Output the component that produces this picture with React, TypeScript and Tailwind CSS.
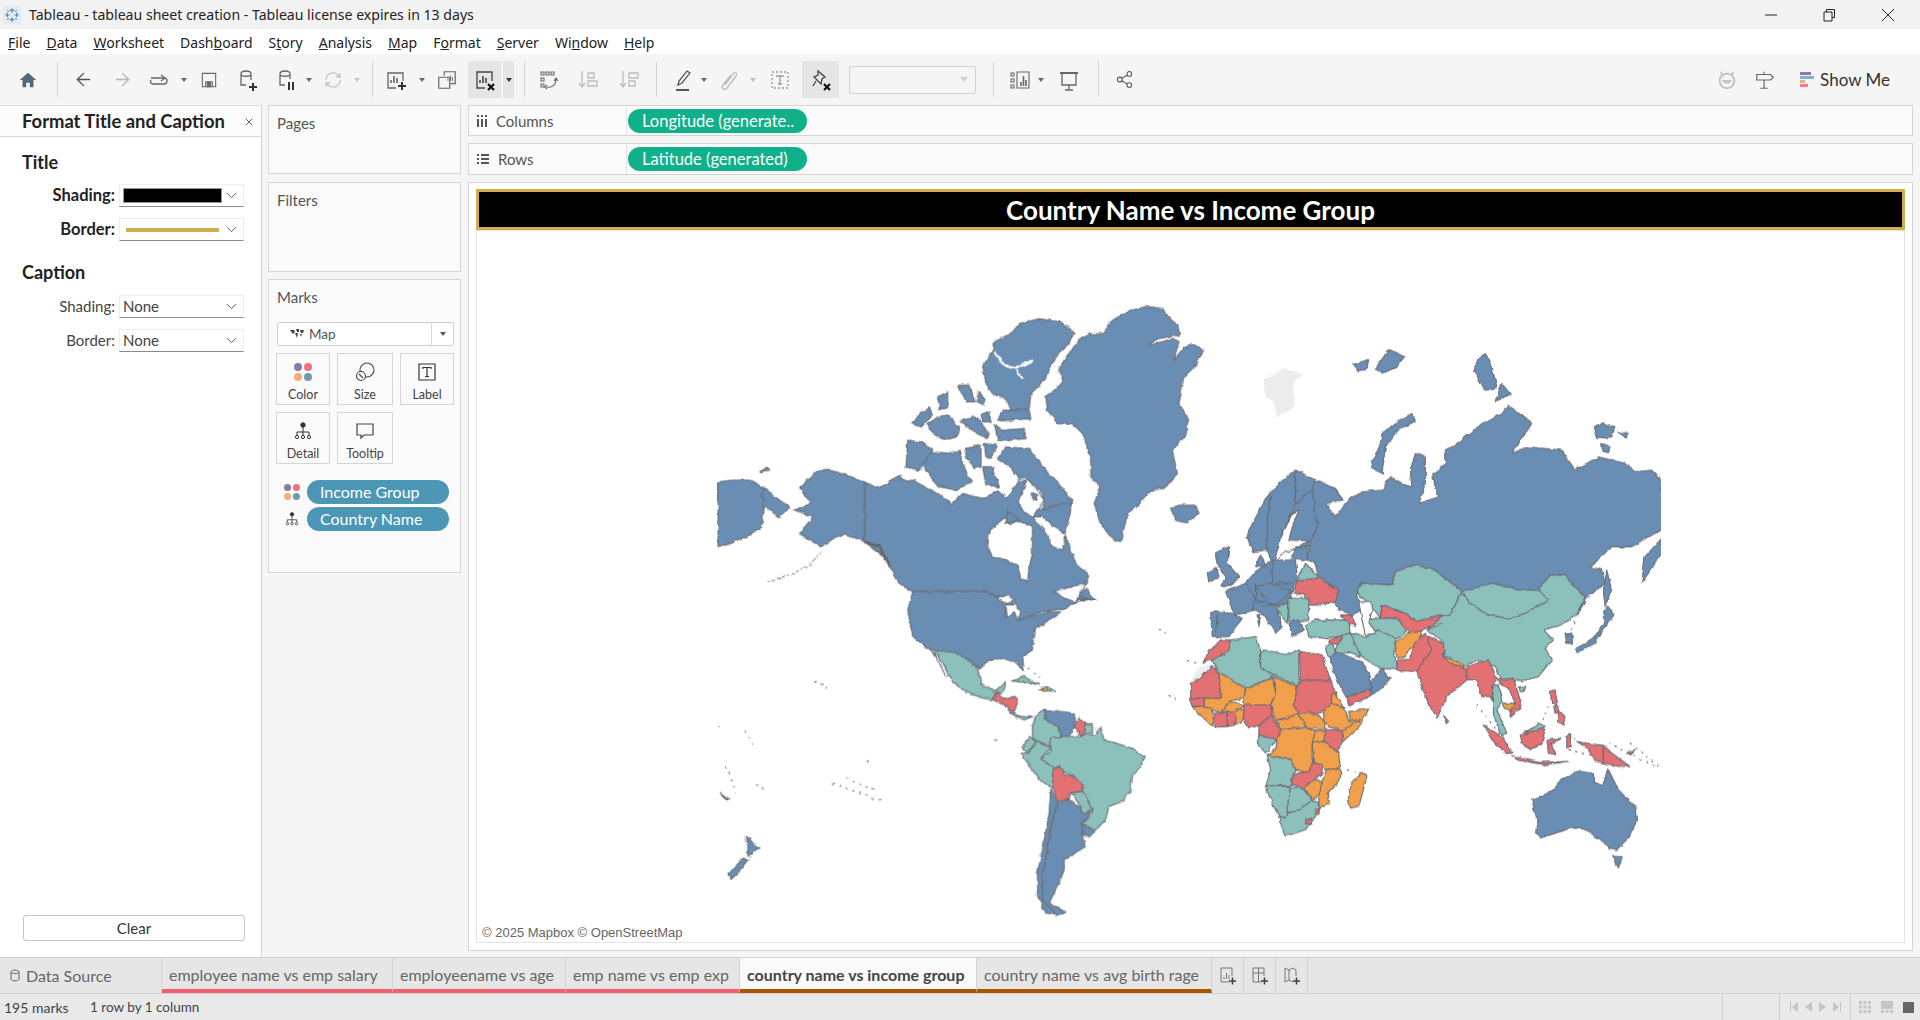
import React from 'react';
import { ArrowLeft, ArrowRight, ChevronDown, Share2, X } from 'lucide-react';

const FILL: Record<string, string> = {
  b: '#6b8db3',
  t: '#8cc0bb',
  r: '#e36f72',
  o: '#f29f4b',
  g: '#ececec',
  w: '#ffffff',
};

// map shapes, coordinates read off 3x crops of the picture: [fill, points]
type Shape = [string, string];

const northAmerica: Shape[] = [
  ['b', '1040,320 1085,285 1090,255 1075,240 1105,195 1125,165 1170,130 1210,130 1240,90 1290,60 1345,48 1395,55 1410,85 1440,110 1440,135 1375,145 1350,165 1420,145 1440,150 1425,210 1455,170 1480,160 1515,180 1490,225 1455,260 1440,340 1465,380 1465,430 1420,480 1435,550 1400,590 1350,605 1310,650 1285,670 1265,755 1235,745 1200,690 1185,640 1205,590 1175,560 1175,500 1150,430 1120,400 1075,400 1045,360'],
  ['b', '850,225 885,175 885,155 940,125 960,100 1020,85 1085,95 1125,125 1110,160 1070,195 1050,240 1020,285 995,310 990,355 935,360 925,330 880,310 860,280'],
  ['b', '895,505 920,470 990,475 1040,540 1080,580 1120,635 1110,670 1090,660 1100,710 1060,685 1015,675 1035,640 1030,610 985,565 960,565 930,530'],
  ['b', '670,510 700,485 760,490 780,480 790,520 815,575 770,600 720,590 680,545'],
  ['b', '625,450 665,455 700,480 660,540 620,530'],
  ['b', '640,400 665,365 695,352 695,380 665,410'],
  ['b', '685,400 710,385 745,375 780,410 778,435 730,450 695,425'],
  ['b', '775,285 810,285 830,335 800,335'],
  ['b', '835,305 860,330 855,345 835,335'],
  ['b', '785,390 830,380 870,430 860,445 825,425'],
  ['b', '845,370 870,368 875,395 850,395'],
  ['b', '885,400 910,420 975,415 980,445 935,450 895,450'],
  ['b', '895,390 910,360 990,360 995,385 905,392'],
  ['b', '715,320 745,305 745,350 720,355'],
  ['b', '800,475 845,465 845,530 825,535 800,500'],
  ['b', '855,460 895,465 875,505 860,500'],
  ['b', '850,530 880,530 900,590 860,585'],
  ['b', '180,545 205,530 210,540'],
  ['b', '495,575 540,595 600,555 620,575 640,570 705,605 760,640 790,610 850,625 900,600 925,625 960,570 985,575 1020,660 1090,640 1120,640 1105,700 1095,725 1130,820 1165,850 1165,880 1140,900 1190,930 1140,930 1100,955 1030,965 960,990 945,960 915,985 925,930 860,905 640,905 600,880 555,800 495,755'],
  ['b', '640,905 860,905 915,930 920,985 945,960 960,990 1050,965 1085,965 1050,990 1005,1020 1000,1080 970,1100 975,1145 955,1120 920,1105 870,1110 840,1135 800,1105 750,1090 690,1080 640,1040 625,960'],
  ['b', '495,575 440,555 375,535 345,550 300,595 335,640 285,660 340,680 300,730 365,770 410,740 440,735 495,755'],
  ['b', '55,575 100,570 150,570 190,590 240,630 270,650 240,680 195,650 185,715 130,745 55,770'],
  ['b', '1415,655 1440,645 1490,645 1500,670 1460,698 1430,690'],
  ['w', '865,770 870,720 920,680 930,700 970,695 1000,710 1000,790 990,830 985,875 965,870 955,825 880,800'],
  ['w', '960,625 985,565 1035,630 1000,680 965,660'],
  ['w', '1000,680 1030,680 1100,735 1090,780 1060,770 1040,730'],
  ['b', '925,660 960,690 920,700'],
  ['b', '1000,610 1015,615 1010,630 1000,625'],
  ['w', '890,925 930,915 945,930 920,940'],
  ['w', '920,945 950,945 965,965 955,990 945,965 925,985'],
  ['w', '1060,905 1160,880 1130,935 1095,925 1080,910'],
  ['b', '1140,915 1160,895 1190,930 1150,925'],
];

const eurasia: Shape[] = [
  ['g', '345,265 375,255 400,235 465,250 430,280 440,350 385,380 370,330 350,320'],
  ['b', '480,585 510,575 560,595 580,630 530,640 560,680 600,630 640,605 700,600 725,560 790,595 785,540 800,490 830,500 830,580 810,640 870,620 850,560 890,520 890,480 940,450 1000,400 1060,370 1080,345 1150,400 1090,490 1140,470 1240,480 1280,540 1350,500 1430,520 1460,545 1510,540 1540,570 1540,720 1500,740 1450,770 1390,770 1325,830 1360,840 1370,880 1340,900 1310,930 1290,975 1280,945 1310,920 1245,855 1205,855 1170,900 1110,900 1030,880 1020,895 940,905 860,840 800,825 740,845 730,885 640,880 625,910 640,960 610,975 570,960 555,920 570,900 510,860 495,815 475,810 480,770 505,700'],
  ['b', '1480,880 1490,800 1540,745 1540,790'],
  ['b', '665,530 690,480 700,430 750,390 790,370 800,390 750,420 710,470 700,550'],
  ['b', '975,245 990,200 1010,190 1030,230 1045,290 1010,300 990,265'],
  ['b', '1040,335 1060,280 1085,310'],
  ['b', '1335,415 1360,398 1400,410 1390,440 1345,445'],
  ['b', '1408,425 1440,430 1430,440'],
  ['b', '1375,840 1390,900 1370,950 1365,900'],
  ['b', '1360,460 1385,470 1380,485 1362,480'],
  ['b', '612,222 660,208 655,230 630,245'],
  ['b', '680,235 720,178 770,200 745,230 700,248'],
  ['b', '1280,1080 1340,1040 1370,990 1365,960 1375,950 1400,975 1370,1010 1340,1060 1285,1090'],
  ['b', '1250,1030 1270,1030 1272,1060 1255,1060'],
  ['b', '300,720 360,610 440,540 500,570 490,600 505,700 480,770 400,780 370,820 355,780 310,785 295,740'],
  ['w', '395,745 430,670 450,660 430,710 420,750 480,752 440,775 400,790 370,830 385,785'],
  ['b', '200,790 240,770 235,820 270,860 245,890 215,890 230,860 210,830'],
  ['b', '175,850 205,835 210,860 180,878'],
  ['b', '230,905 290,880 320,845 370,810 440,810 445,860 430,905 420,940 380,945 400,1010 380,1030 350,980 320,960 260,975 250,960 240,930'],
  ['b', '185,965 250,970 280,985 240,1040 190,1040'],
  ['b', '430,805 440,775 475,770 475,810'],
  ['b', '320,830 335,795 350,825'],
  ['b', '325,975 335,975 330,1010'],
  ['t', '445,870 470,820 510,860 495,870'],
  ['r', '435,910 445,870 510,865 570,900 560,935 520,945 480,945 465,915'],
  ['t', '420,925 480,925 480,990 420,995'],
  ['t', '380,950 420,940 415,1000 395,975'],
  ['b', '420,1000 450,990 465,1020 430,1040'],
  ['t', '470,1005 500,990 600,990 605,1035 530,1045 480,1040'],
  ['r', '575,975 610,975 620,1010 600,1000'],
  ['t', '625,905 640,880 730,885 740,845 800,825 860,840 940,905 905,975 880,985 800,995 770,970 700,945 695,985 670,950 650,935'],
  ['r', '695,985 700,948 770,970 800,995 885,975 870,1000 820,1020 795,1030 770,1020 745,980'],
  ['t', '940,905 965,940 1020,975 1080,985 1130,970 1195,930 1170,900 1205,855 1245,855 1310,920 1285,975 1240,1005 1185,1020 1215,1050 1190,1075 1210,1110 1170,1160 1120,1175 1060,1170 1040,1130 985,1110 945,1130 890,1100 875,1050 835,1020 885,975 905,975'],
  ['t', '940,905 1030,880 1110,900 1170,900 1200,930 1130,970 1080,985 1020,975 965,940'],
  ['t', '640,990 695,985 745,985 775,1025 740,1050 690,1020 655,1030'],
  ['t', '605,1030 650,1040 690,1020 740,1045 735,1100 750,1140 690,1135 640,1100 610,1060'],
  ['w', '630,935 665,935 670,960 660,1000 680,1030 650,1035 640,990'],
  ['o', '735,1060 780,1030 820,1020 815,1060 780,1080 770,1100 745,1105'],
  ['t', '580,1035 605,1030 635,1100 600,1085 550,1100'],
  ['r', '540,1070 545,1050 585,1035 570,1060'],
];

const americasSouth: Shape[] = [
  ['t', '690,30 770,38 810,65 835,85 845,130 885,155 920,125 915,150 880,180 850,175 780,145 745,100 700,40'],
  ['w', '705,40 716,45 748,105 740,110'],
  ['r', '880,180 895,155 910,175 945,170 955,185 945,215 905,190'],
  ['t', '930,210 960,230 1000,232 975,240 945,228'],
  ['t', '940,120 975,110 1020,135 975,125'],
  ['t', '1020,150 1040,140 1070,155'],
  ['o', '1032,142 1042,142 1042,154 1032,154'],
  ['t', '1000,260 1010,225 1040,205 1035,235 1075,260 1085,290 1055,295 1055,320 1020,305 1000,295'],
  ['b', '1035,210 1050,210 1125,220 1130,255 1110,290 1085,290 1075,260 1040,240'],
  ['t', '1025,355 1055,335 1055,295 1085,290 1110,290 1140,290 1155,285 1190,285 1205,265 1215,300 1300,325 1335,350 1325,380 1300,410 1295,450 1270,485 1230,500 1220,540 1185,575 1150,550 1180,520 1165,480 1120,460 1150,440 1125,410 1090,395 1085,378 1060,385'],
  ['r', '1125,255 1140,235 1160,255 1155,285 1140,285'],
  ['t', '1155,255 1180,255 1180,280 1160,280'],
  ['g', '1180,255 1200,265 1190,285'],
  ['t', '970,325 990,290 1010,305 985,340'],
  ['t', '985,340 1015,305 1055,325 1025,355 1060,385 1060,445 1020,420 965,340'],
  ['r', '1060,390 1085,378 1095,405 1125,410 1155,440 1150,455 1115,460 1110,478 1075,485 1060,440'],
  ['t', '1115,460 1150,455 1165,480 1175,505 1155,525 1145,500'],
  ['b', '1150,550 1190,575 1170,595 1150,585'],
  ['b', '1055,445 1075,490 1050,580 1040,670 1030,780 1070,825 1040,820 1015,770 1015,700 1030,630 1050,520'],
  ['b', '1075,490 1110,480 1145,505 1155,525 1180,510 1150,550 1150,590 1160,620 1095,660 1095,690 1080,730 1050,790 1100,818 1075,830 1030,780 1030,700 1045,630 1055,560'],
  ['b', '140,590 178,625 145,650 145,620'],
  ['b', '85,705 135,655 145,660 110,705 95,720'],
  ['b', '62,458 90,480 80,482'],
];

const oldWorldSouth: Shape[] = [
  ['r', '160,190 185,150 215,120 245,120 240,155 190,180'],
  ['g', '125,245 150,200 185,197 150,240'],
  ['t', '190,180 240,155 245,120 320,110 335,150 335,205 375,230 290,265 205,215'],
  ['t', '335,160 345,150 415,165 450,150 450,260 385,230 335,205'],
  ['r', '452,155 520,165 545,240 455,242'],
  ['r', '455,242 545,240 565,290 530,335 505,340 445,340 435,320 445,260'],
  ['r', '125,250 150,240 188,200 210,215 215,295 125,295'],
  ['o', '210,215 290,265 285,295 240,305 215,340 165,320 165,295 215,295'],
  ['o', '290,265 375,232 380,280 365,315 285,315 285,300'],
  ['o', '378,232 445,262 435,320 450,340 415,355 380,360 365,318 380,280'],
  ['r', '120,295 165,295 165,320 130,320'],
  ['o', '130,320 190,325 195,380 150,345'],
  ['o', '215,340 240,305 285,315 270,335 230,335'],
  ['r', '195,340 235,340 235,380 200,382'],
  ['r', '235,335 260,335 262,375 235,380'],
  ['o', '260,330 285,330 280,370 262,372'],
  ['r', '285,315 365,315 370,345 340,375 300,385 280,350'],
  ['r', '370,345 378,370 400,395 385,420 330,405 330,375'],
  ['o', '378,365 415,355 450,340 475,380 400,390'],
  ['o', '450,340 505,340 530,370 525,390 475,385'],
  ['o', '525,335 550,310 590,330 600,365 640,355 580,395 545,380 525,365'],
  ['o', '600,335 660,328 625,390 580,430 580,395 635,358 605,365'],
  ['o', '545,285 555,280 590,325 550,310'],
  ['r', '595,290 670,268 672,285 600,318'],
  ['b', '540,175 560,155 640,185 665,230 665,268 595,290 570,250'],
  ['b', '665,268 670,240 700,205 725,235 695,270 670,285'],
  ['t', '530,145 550,130 560,155 540,175'],
  ['r', '530,385 580,395 580,430 565,455 525,425'],
  ['o', '495,395 530,390 525,425 490,430'],
  ['o', '385,420 400,390 475,385 500,395 490,430 490,470 495,525 440,510 425,480 355,465 380,450'],
  ['o', '490,430 525,425 570,460 575,505 530,510 495,490'],
  ['t', '330,405 385,420 350,460 325,430'],
  ['t', '355,465 425,480 445,510 430,525 430,558 350,558 365,510'],
  ['r', '430,525 480,515 490,490 520,495 520,520 490,545 465,565 430,558'],
  ['o', '530,510 575,505 575,540 535,580 540,610 510,625 510,590 520,545'],
  ['o', '465,565 495,540 520,550 510,590 490,600'],
  ['t', '350,558 425,562 418,640 412,655 390,650 370,610'],
  ['t', '418,600 425,565 460,565 490,600 460,625 418,640'],
  ['t', '390,650 412,655 418,640 460,625 490,600 510,605 510,640 470,690 410,710 395,680'],
  ['r', '470,660 488,655 485,672 472,672'],
  ['r', '500,632 512,630 510,644 500,644'],
  ['o', '640,518 655,530 630,620 605,625 598,590 610,550'],
  ['r', '745,180 785,175 800,125 830,100 850,150 805,215 790,215 745,210'],
  ['r', '805,215 850,150 835,110 885,130 885,170 950,205 955,240 895,290 865,355 835,300 815,250'],
  ['r', '885,345 900,365 890,372'],
  ['o', '888,172 900,172 945,195 945,205 905,190'],
  ['r', '955,200 1020,180 1045,235 1030,260 1035,310 1025,290 1000,290 985,240 955,240'],
  ['t', '1030,255 1050,255 1060,305 1045,330 1075,400 1060,405 1035,345 1035,310'],
  ['r', '1045,240 1095,235 1115,300 1115,325 1085,350 1085,335 1100,310 1085,275'],
  ['o', '1060,310 1100,310 1090,335 1070,330'],
  ['t', '1112,262 1128,258 1125,275 1115,275'],
  ['r', '1005,378 1060,410 1090,460 1075,462 1030,420'],
  ['r', '1090,468 1170,488 1260,485 1190,495 1110,482'],
  ['r', '1115,405 1170,375 1190,390 1180,430 1145,450 1120,430'],
  ['t', '1130,405 1170,370 1190,380 1155,395'],
  ['r', '1195,420 1240,415 1205,435 1225,465 1200,460'],
  ['r', '1205,275 1220,270 1228,315 1210,310'],
  ['r', '1215,320 1230,315 1235,340 1220,340'],
  ['r', '1230,330 1250,350 1245,375 1230,365'],
  ['r', '1255,410 1270,400 1268,440 1255,445'],
  ['r', '1285,425 1330,435 1365,440 1365,490 1340,485 1320,450'],
  ['r', '1365,440 1410,475 1445,500 1410,500 1365,490'],
  ['r', '1440,455 1460,450 1445,465'],
  ['b', '1150,600 1210,575 1245,535 1290,515 1335,520 1335,545 1365,555 1378,505 1410,570 1460,620 1465,665 1440,715 1405,750 1385,745 1350,715 1335,710 1320,690 1270,685 1175,715 1162,700 1165,660'],
  ['b', '1393,770 1422,772 1410,802'],
];

// tiny islands, drawn as dotted runs
const specksC = ['345,122 385,145', '55,258 60,260', '135,275 165,320', '80,380 110,460', '170,435 200,450', '400,430 545,485', '440,415 530,450', '500,365 515,382', '885,300 905,308', '985,85 1035,125', '1360,1010 1400,1030', '1410,165 1430,180'];
const specksD = ['115,185 150,190', '30,88 60,100', '60,285 78,298', '985,315 1090,450', '1260,400 1290,425', '1380,430 1530,505', '1445,430 1530,500', '595,510 635,525', '1180,360 1200,320', '1250,130 1280,60', '1260,450 1340,470'];

// inner country borders that are not polygon edges
const bordersB = [
  '440,545 440,640 395,745', '365,610 355,690 355,780', '490,600 440,640',
  '370,810 370,880 320,890 350,930', '320,880 320,930 380,945 430,905 370,880', '290,880 320,930 310,960',
  '340,950 380,945', '205,970 200,1035', '380,880 430,880', '880,1000 835,1020',
];

const Group: React.FC<{ x: number; y: number; shapes: Shape[]; specks?: string[]; children?: React.ReactNode }> = ({ x, y, shapes, specks, children }) => (
  <g transform={`translate(${x} ${y}) scale(0.3333)`}>
    {shapes.map(([fill, points], i) => (
      <polygon key={i} points={points} fill={FILL[fill]} stroke={fill === 'g' ? 'none' : '#676c73'} strokeWidth={1.1} strokeLinejoin="round" vectorEffect="non-scaling-stroke" />
    ))}
    {specks?.map((points, i) => (
      <polyline key={i} points={points} fill="none" stroke="#666" strokeWidth={1.2} strokeDasharray="2 5" vectorEffect="non-scaling-stroke" />
    ))}
    {children}
  </g>
);

const WorldMap = () => (
  <svg viewBox="477 231 1429 711" className="block w-full h-full">
    <defs>
      <filter id="rough" x="0" y="0" width="100%" height="100%">
        <feTurbulence type="fractalNoise" baseFrequency="0.14" numOctaves="2" seed="4" />
        <feDisplacementMap in="SourceGraphic" scale="4" xChannelSelector="R" yChannelSelector="G" />
      </filter>
    </defs>
    <g filter="url(#rough)">
      <Group x={700} y={290} shapes={northAmerica}>
        <polyline points="885,185 915,225 950,235 1000,210" fill="none" stroke="#fff" strokeWidth={2.5} vectorEffect="non-scaling-stroke" />
        <polyline points="950,240 970,265" fill="none" stroke="#fff" strokeWidth={2} vectorEffect="non-scaling-stroke" />
        <polyline points="190,590 190,660" fill="none" stroke="#666" strokeWidth={1} vectorEffect="non-scaling-stroke" />
        <polyline points="495,755 540,770 570,830" fill="none" stroke="#666" strokeWidth={3} vectorEffect="non-scaling-stroke" />
        <polyline points="365,785 330,825 270,855 200,875" fill="none" stroke="#666" strokeWidth={1} strokeDasharray="3 2" vectorEffect="non-scaling-stroke" />
      </Group>
      <Group x={1150} y={290} shapes={eurasia}>
        {bordersB.map((points) => (
          <polyline key={points} points={points} fill="none" stroke="#666" strokeWidth={1} vectorEffect="non-scaling-stroke" />
        ))}
      </Group>
      <Group x={700} y={640} shapes={americasSouth} specks={specksC} />
      <Group x={1150} y={600} shapes={oldWorldSouth} specks={specksD} />
    </g>
  </svg>
);

// toolbar icons, all grey line drawings on a 24 box
const Ic: React.FC<{ children: React.ReactNode; color?: string; size?: number }> = ({ children, color = '#666', size = 24 }) => (
  <svg width={size} height={size} viewBox="0 0 24 24" fill="none" stroke={color} strokeWidth={1.3}>
    {children}
  </svg>
);

const Plus = ({ x = 17, y = 18 }: { x?: number; y?: number }) => (
  <path d={`M${x - 4} ${y}h8M${x} ${y - 4}v8`} stroke="#333" strokeWidth={2} />
);
const Cross = ({ x = 17, y = 19 }: { x?: number; y?: number }) => (
  <path d={`M${x - 3} ${y - 3}l6 6M${x + 3} ${y - 3}l-6 6`} stroke="#111" strokeWidth={2.2} />
);
const Bars = () => <path d="M7 15v-3M10 15v-7M13 15v-5" strokeWidth={1.6} />;

const CaretMark = ({ color = '#666' }: { color?: string }) => (
  <span className="w-0 h-0 border-l-[3px] border-r-[3px] border-t-[4px] border-l-transparent border-r-transparent" style={{ borderTopColor: color }} />
);

// every toolbar item carries its own left margin
const Slot: React.FC<{ className: string; children?: React.ReactNode }> = ({ className, children }) => (
  <div className={`flex items-center justify-center shrink-0 h-[37px] ${className}`}>{children}</div>
);
const Caret: React.FC<{ className: string; color?: string }> = ({ className, color }) => (
  <div className={`flex items-center justify-center shrink-0 w-[6px] ${className}`}><CaretMark color={color} /></div>
);
const Sep: React.FC<{ className: string }> = ({ className }) => <div className={`w-px h-[35px] bg-[#d4d4d4] shrink-0 ${className}`} />;

const Toolbar = () => (
  <div className="h-[51px] bg-[#f5f5f5] flex items-center shrink-0">
    <Slot className="w-[24px] ml-[16px]">
      <Ic size={22}><path d="M3 12 12 4l9 8h-3v8h-4v-5h-4v5H6v-8z" fill="#56677a" stroke="none" /></Ic>
    </Slot>
    <Sep className="ml-[17px]" />
    <Slot className="w-[24px] ml-[13px]"><ArrowLeft size={21} color="#555" strokeWidth={1.6} /></Slot>
    <Slot className="w-[24px] ml-[15px]"><ArrowRight size={21} color="#b5b5b5" strokeWidth={1.6} /></Slot>
    <Slot className="w-[24px] ml-[13px]">
      <Ic><path d="M4 10h13a2.500 2.500 0 0 1 0 6H6a2.500 2.500 0 0 1-2-4M14 7l4 3-4 3" /></Ic>
    </Slot>
    <Caret className="ml-[10px]" />
    <Slot className="w-[24px] ml-[10px]">
      <Ic size={20}><path d="M4 4h16v16H4zM8 20v-6h8v6" /><path d="M10 15h4v5h-4z" fill="#666" /></Ic>
    </Slot>
    <Slot className="w-[24px] ml-[14px]">
      <Ic><path d="M6 6c0-4 10-4 10 0v6M6 6v11h5M6 6c0 3 10 3 10 0" /><Plus x={18} y={19} /></Ic>
    </Slot>
    <Slot className="w-[24px] ml-[15px]">
      <Ic><path d="M6 6c0-4 10-4 10 0v5M6 6v11h5M6 6c0 3 10 3 10 0" /><path d="M15 14v8M19 14v8" stroke="#333" strokeWidth={2} /></Ic>
    </Slot>
    <Caret className="ml-[8px]" />
    <Slot className="w-[24px] ml-[9px]">
      <Ic color="#c4c4c4"><path d="M5 12a7 7 0 0 1 12-5l2 2M19 12a7 7 0 0 1-12 5l-2-2M19 5v4h-4M5 19v-4h4" /></Ic>
    </Slot>
    <Caret className="ml-[9px]" color="#c4c4c4" />
    <Sep className="ml-[12px]" />
    <Slot className="w-[24px] ml-[11px]">
      <Ic><path d="M12 20H4V5h15v8" /><Bars /><Plus x={18} y={18} /></Ic>
    </Slot>
    <Caret className="ml-[11px]" />
    <Slot className="w-[24px] ml-[10px]">
      <Ic size={22}><path d="M9 7V3h12v13h-5M3 9h12v12H3z" /><path d="M13 13v-3M16 13V7M18 13v-4" strokeWidth={1} /></Ic>
    </Slot>
    <Slot className="w-[33px] ml-[9px] bg-[#e5e5e5]">
      <Ic color="#444"><path d="M12 20H4V4h15v9" /><Bars /><Cross x={18} y={19} /></Ic>
    </Slot>
    <Slot className="w-[11px] ml-[2px] bg-[#e5e5e5]"><CaretMark color="#333" /></Slot>
    <Sep className="ml-[10px]" />
    <Slot className="w-[24px] ml-[12px]">
      <Ic><path d="M4 4h3v3H4zM9 4h3v3H9zM14 4h3v3h-3zM4 10h3v3H4zM4 16h3v3H4zM10 19c5 1 9-2 9-8M17 13l2-3 2 3M10 17l-2 2 2 2" strokeWidth={1.1} /></Ic>
    </Slot>
    <Slot className="w-[24px] ml-[15px]">
      <Ic color="#bcbcbc"><path d="M6 3v15M3 15l3 4 3-4M12 5h6v5h-6zM12 13h9v5h-9z" /></Ic>
    </Slot>
    <Slot className="w-[24px] ml-[17px]">
      <Ic color="#bcbcbc"><path d="M6 3v15M3 15l3 4 3-4M12 5h9v5h-9zM12 13h6v5h-6z" /></Ic>
    </Slot>
    <Sep className="ml-[15px]" />
    <Slot className="w-[24px] ml-[14px]">
      <Ic color="#555"><path d="M7 17l1-4 8-10 3 2-8 10-4 2z" /><path d="M5 22h13" strokeWidth={2} /></Ic>
    </Slot>
    <Caret className="ml-[6px]" />
    <Slot className="w-[24px] ml-[10px]">
      <Ic color="#bcbcbc"><path d="M8 17 16 6c2-3 5 0 3 2l-9 12c-3 3-6 0-4-3l8-10" /></Ic>
    </Slot>
    <Caret className="ml-[9px]" color="#bcbcbc" />
    <Slot className="w-[24px] ml-[12px]">
      <Ic color="#999"><path d="M4 4h16v16H4z" strokeDasharray="2 2" /><path d="M8 8h8M12 8v8M10 16h4" /></Ic>
    </Slot>
    <Slot className="w-[37px] ml-[10px] bg-[#e5e5e5]">
      <Ic color="#444"><path d="M9 3l7 6-3 2-1 5-7-7 4-2zM7 13l-3 5" /><Cross x={18} y={19} /></Ic>
    </Slot>
    <div className="w-[127px] h-[28px] ml-[10px] border border-[#d2d2d2] rounded-[2px] flex items-center justify-end pr-[7px] shrink-0">
      <span className="w-0 h-0 border-l-[4px] border-r-[4px] border-t-[5px] border-l-transparent border-r-transparent border-t-[#cfcfcf]" />
    </div>
    <Sep className="ml-[17px]" />
    <Slot className="w-[24px] ml-[14px]">
      <Ic><path d="M3 5h3v3H3zM3 11h3v3H3zM3 17h3v3H3zM9 4h12v16H9z" strokeWidth={1.1} /><path d="M13 18v-4M15.500 18V8M18 18v-6" strokeWidth={1.6} /></Ic>
    </Slot>
    <Caret className="ml-[6px]" />
    <Slot className="w-[24px] ml-[13px]">
      <Ic><path d="M5 5v12h14V5M12 17v5M8 22h8" /><path d="M3 5h18" strokeWidth={2} /></Ic>
    </Slot>
    <Sep className="ml-[17px]" />
    <Slot className="w-[24px] ml-[13px]"><Share2 size={19} color="#555" strokeWidth={1.3} /></Slot>
    <div className="flex-1" />
    <Slot className="w-[24px]">
      <Ic size={22} color="#c0c0c0"><circle cx="12" cy="13" r="8" strokeWidth={2} /><path d="M5 3l2 4M19 3l-2 4M7 13h10M9 15h6" strokeWidth={1.8} /></Ic>
    </Slot>
    <Slot className="w-[24px] ml-[14px]">
      <Ic size={22}><path d="M3 6h15l3 3-3 3H3zM11 3v3M11 12v9M7 21h8" /></Ic>
    </Slot>
    <div className="flex flex-col gap-[1px] w-[14px] ml-[23px] mr-[6px] shrink-0">
      <div className="h-[3px] w-[11px] bg-[#8a7ba3]" />
      <div className="h-[3px] w-[14px] bg-[#8aacd1]" />
      <div className="h-[3px] w-[5px] bg-[#f2ae7f]" />
      <div className="h-[3px] w-[8px] bg-[#f47d8c]" />
    </div>
    <span className="text-[17px] text-[#333] mr-[30px] font-['Lato',sans-serif]">Show Me</span>
  </div>
);

const MENU: [string, string, string][] = [
  ['', 'F', 'ile'], ['', 'D', 'ata'], ['', 'W', 'orksheet'], ['Dash', 'b', 'oard'], ['S', 't', 'ory'], ['', 'A', 'nalysis'],
  ['', 'M', 'ap'], ['F', 'o', 'rmat'], ['', 'S', 'erver'], ['Wi', 'n', 'dow'], ['', 'H', 'elp'],
];

const Dropdown: React.FC<{ children?: React.ReactNode }> = ({ children }) => (
  <div className="w-[125px] h-[23px] bg-white border-b border-b-[#8a8a8a] border-t border-x border-t-[#eeeeee] border-x-[#eeeeee] flex items-center justify-between pr-[3px] pl-[3px] shrink-0">
    <div className="flex-1 flex items-center">{children}</div>
    <ChevronDown size={17} color="#555" strokeWidth={1.3} />
  </div>
);

const FormatRow: React.FC<{ label: string; bold?: boolean; children?: React.ReactNode }> = ({ label, bold, children }) => (
  <div className="flex items-center h-[23px]">
    <span className={`w-[115px] text-right ${bold ? 'text-[16.500px] font-bold text-[#222]' : 'text-[15px] text-[#444]'}`}>{label}</span>
    <div className="w-[4px]" />
    <Dropdown>{children}</Dropdown>
  </div>
);

const FormatPanel = () => (
  <div className="w-[262px] shrink-0 bg-white border-r border-[#d4d4d4] flex flex-col">
    <div className="h-[32px] bg-[#fcfcfc] border-y border-[#d8d8d8] flex items-center justify-between pl-[22px] pr-[6px] pt-[2px] shrink-0">
      <span className="text-[18.400px] font-bold text-[#222]">Format Title and Caption</span>
      <X size={12} color="#666" />
    </div>
    <div className="text-[18px] font-bold text-[#222] pl-[22px] mt-[12px] h-[24px]">Title</div>
    <div className="mt-[11px] flex flex-col gap-[11px]">
      <FormatRow label="Shading:" bold>
        <div className="w-[99px] h-[15px] bg-black border border-[#999]" />
      </FormatRow>
      <FormatRow label="Border:" bold>
        <div className="ml-[3px] w-[93px] h-[4px] bg-[#d0ae4a]" />
      </FormatRow>
    </div>
    <div className="text-[18px] font-bold text-[#222] pl-[22px] mt-[18px] h-[24px]">Caption</div>
    <div className="mt-[12px] flex flex-col gap-[11px]">
      <FormatRow label="Shading:"><span className="text-[15px] text-[#444]">None</span></FormatRow>
      <FormatRow label="Border:"><span className="text-[15px] text-[#444]">None</span></FormatRow>
    </div>
    <div className="flex-1" />
    <button className="mx-[23px] mb-[16px] w-[222px] h-[26px] border border-[#c4c4c4] rounded-[3px] text-[15px] text-[#333] bg-white">Clear</button>
  </div>
);

const Card: React.FC<{ title: string; className: string; children?: React.ReactNode }> = ({ title, className, children }) => (
  <div className={`border border-[#d4d4d4] bg-[#fafafa] px-[8px] shrink-0 ${className}`}>
    <div className="text-[15px] text-[#555] mt-[6px] h-[22px]">{title}</div>
    {children}
  </div>
);

const ColorDots = ({ size = 8 }: { size?: number }) => (
  <svg width={size * 2 + 2} height={size * 2 + 2} viewBox="0 0 18 18">
    <circle cx="4" cy="4" r="4" fill="#8a7ba3" />
    <circle cx="14" cy="4" r="4" fill="#f4707f" />
    <circle cx="4" cy="14" r="4" fill="#f2ae7f" />
    <circle cx="14" cy="14" r="4" fill="#6f9ca8" />
  </svg>
);

const DetailIcon = ({ size = 18 }: { size?: number }) => (
  <svg width={size} height={size} viewBox="0 0 18 18" fill="none" stroke="#333" strokeWidth={1}>
    <circle cx="9" cy="3" r="2.2" fill="#333" />
    <path d="M9 5v5M3 13v-3h12v3M9 10v3" />
    <circle cx="3" cy="15" r="1.6" />
    <circle cx="9" cy="15" r="1.6" />
    <circle cx="15" cy="15" r="1.6" />
  </svg>
);

const MarkButton: React.FC<{ label: string; className: string; children: React.ReactNode }> = ({ label, className, children }) => (
  <div className={`h-[52px] border border-[#d4d4d4] bg-[#fafafa] flex flex-col items-center pt-[7px] shrink-0 ${className}`}>
    <div className="h-[22px] flex items-center justify-center">{children}</div>
    <span className="text-[12.500px] text-[#444] leading-[16px] mt-[4px]">{label}</span>
  </div>
);

const MarkPill: React.FC<{ label: string; icon: React.ReactNode }> = ({ label, icon }) => (
  <div className="flex items-center h-[24px]">
    <div className="w-[30px] flex justify-center shrink-0">{icon}</div>
    <div className="w-[142px] h-[24px] rounded-full bg-[#4c97b5] text-white text-[16px] pl-[13px] flex items-center">{label}</div>
  </div>
);

const MiddleColumn = () => (
  <div className="w-[193px] ml-[6px] flex flex-col shrink-0">
    <Card title="Pages" className="h-[69px]" />
    <Card title="Filters" className="h-[90px] mt-[8px]" />
    <Card title="Marks" className="h-[294px] mt-[7px]">
      <div className="mt-[14px] w-[177px] h-[24px] border border-[#d0d0d0] rounded-[2px] bg-white flex items-center">
        <svg width="14" height="10" viewBox="0 0 14 10" className="ml-[12px]" fill="#444">
          <path d="M0 1h4l1 2-2 2zM6 0h3v3H7zM10 1h4l-1 3h-2zM5 4h3l-1 5zM10 5l2 0-1 3z" />
        </svg>
        <span className="text-[13.500px] text-[#555] ml-[5px] flex-1">Map</span>
        <div className="w-[22px] h-full border-l border-[#d8d8d8] flex items-center justify-center"><CaretMark color="#555" /></div>
      </div>
      <div className="flex gap-[7px] mt-[7px] -ml-[1px]">
        <MarkButton label="Color" className="w-[54px]"><ColorDots /></MarkButton>
        <MarkButton label="Size" className="w-[56px]">
          <svg width="20" height="20" viewBox="0 0 20 20" fill="none" stroke="#444" strokeWidth={1.1}>
            <circle cx="12" cy="8" r="7" fill="#fafafa" />
            <circle cx="6" cy="14" r="4.500" fill="#fafafa" />
            <path d="M4 12l4 4" />
          </svg>
        </MarkButton>
        <MarkButton label="Label" className="w-[54px]">
          <svg width="18" height="18" viewBox="0 0 18 18" fill="none" stroke="#333">
            <path d="M1 1h16v16H1z" strokeWidth={1.2} />
            <path d="M5 6V4.500h8V6M9 4.500v9M7 13.500h4" strokeWidth={1.2} />
          </svg>
        </MarkButton>
      </div>
      <div className="flex gap-[7px] mt-[7px] -ml-[1px]">
        <MarkButton label="Detail" className="w-[54px]"><DetailIcon /></MarkButton>
        <MarkButton label="Tooltip" className="w-[56px]">
          <svg width="20" height="18" viewBox="0 0 20 18" fill="none" stroke="#444" strokeWidth={1.2}>
            <path d="M2 2h16v11H9l-3 3v-3H2z" />
          </svg>
        </MarkButton>
      </div>
      <div className="mt-[16px] flex flex-col gap-[3px]">
        <MarkPill label="Income Group" icon={<ColorDots size={7} />} />
        <MarkPill label="Country Name" icon={<DetailIcon size={14} />} />
      </div>
    </Card>
  </div>
);

const Shelf: React.FC<{ label: string; pill: string; icon: React.ReactNode; className: string }> = ({ label, pill, icon, className }) => (
  <div className={`border border-[#d4d4d4] bg-[#fafafa] flex items-center shrink-0 ${className}`}>
    <div className="w-[158px] h-full border-r border-[#e2e2e2] flex items-center pl-[8px] gap-[9px] shrink-0">
      {icon}
      <span className="text-[15px] text-[#555]">{label}</span>
    </div>
    <div className="ml-[1px] w-[179px] h-[24px] rounded-full bg-[#0fb08a] text-white text-[16.500px] pl-[14px] flex items-center">{pill}</div>
  </div>
);

const TABS: { label: string; width: string; bar: string; active?: boolean }[] = [
  { label: 'employee name vs emp salary', width: 'w-[231px]', bar: 'border-b-[#f55d70]' },
  { label: 'employeename vs age', width: 'w-[173px]', bar: 'border-b-[#f55d70]' },
  { label: 'emp name vs emp exp', width: 'w-[174px]', bar: 'border-b-[#f55d70]' },
  { label: 'country name vs income group', width: 'w-[237px]', bar: 'border-b-[#a85400]', active: true },
  { label: 'country name vs avg birth rage', width: 'w-[235px]', bar: 'border-b-[#a85400]' },
];

const SheetTabs = () => (
  <div className="h-[37px] bg-[#e6e6e6] border-y border-[#d0d0d0] flex shrink-0 text-[16px] text-[#666]">
    <div className="w-[162px] flex items-center pl-[10px] gap-[6px] border-r border-[#d4d4d4] shrink-0">
      <svg width="10" height="13" viewBox="0 0 10 13" fill="none" stroke="#666" strokeWidth={1}>
        <path d="M1 3c0-2.500 8-2.500 8 0v7c0 2.500-8 2.500-8 0zM1 3c0 2 8 2 8 0" />
      </svg>
      Data Source
    </div>
    {TABS.map(({ label, width, bar, active }) => (
      <div
        key={label}
        className={`${width} h-full border-b-[4px] ${bar} border-r border-r-[#d4d4d4] flex items-center pl-[7px] pt-[3px] shrink-0 whitespace-nowrap ${active ? 'bg-[#fafafa] font-bold text-[#444]' : ''}`}
      >
        {label}
      </div>
    ))}
    {[
      <path key="a" d="M11 16H3V2h11v8M6 13v-2M8.500 13V7M11 13V9" />,
      <path key="b" d="M11 16H3V2h11v8M3 7h11M8.500 2v14" />,
      <path key="c" d="M11 16l-4-2-4 2V2l4 2 4-2 3 2v6M7 4v10" />,
    ].map((shape, i) => (
      <div key={i} className="w-[32px] h-full border-r border-[#d4d4d4] flex items-center justify-center shrink-0">
        <svg width="20" height="20" viewBox="0 0 20 20" fill="none" stroke="#777" strokeWidth={1}>
          {shape}
          <path d="M11 15h7M14.500 11.500v7" stroke="#444" strokeWidth={1.6} />
        </svg>
      </div>
    ))}
  </div>
);

const StatusBar = () => (
  <div className="h-[26px] bg-[#e9e9e9] flex items-center shrink-0 text-[13.500px] text-[#444]">
    <span className="w-[90px] pl-[4px] text-[14px]">195 marks</span>
    <span>1 row by 1 column</span>
    <div className="flex-1" />
    <div className="w-px h-full bg-[#d0d0d0]" />
    <div className="w-[56px]" />
    <div className="w-px h-full bg-[#d0d0d0]" />
    <div className="w-[70px] flex items-center justify-around px-[6px] text-[#c4c4c4]">
      <svg width="8" height="10" viewBox="0 0 8 10" fill="#c4c4c4"><path d="M0 0h1v10H0zM8 0v10L2 5z" /></svg>
      <svg width="7" height="10" viewBox="0 0 7 10" fill="#c4c4c4"><path d="M7 0v10L0 5z" /></svg>
      <svg width="7" height="10" viewBox="0 0 7 10" fill="#c4c4c4"><path d="M0 0v10l7-5z" /></svg>
      <svg width="8" height="10" viewBox="0 0 8 10" fill="#c4c4c4"><path d="M7 0h1v10H7zM0 0v10l6-5z" /></svg>
    </div>
    <div className="w-px h-full bg-[#d0d0d0]" />
    <div className="flex items-center gap-[10px] w-[69px] pl-[8px]">
      <svg width="12" height="12" viewBox="0 0 12 12" fill="#c4c4c4"><path d="M0 0h3v3H0zM4.500 0h3v3h-3zM9 0h3v3H9zM0 4.500h3v3H0zM4.500 4.500h3v3h-3zM9 4.500h3v3H9zM0 9h3v3H0zM4.500 9h3v3h-3zM9 9h3v3H9z" /></svg>
      <svg width="12" height="12" viewBox="0 0 12 12" fill="#c4c4c4"><path d="M0 0h12v8H0zM0 9h3v3H0zM4.500 9h3v3h-3zM9 9h3v3H9z" /></svg>
      <div className="w-[11px] h-[11px] bg-[#666]" />
    </div>
  </div>
);

export default function App() {
  return (
    <div className="w-[1920px] h-[1020px] flex flex-col overflow-hidden bg-[#f5f5f5] font-['Lato',sans-serif]">
      {/* window title */}
      <div className="h-[29px] bg-[#f2f2f2] flex items-center shrink-0 font-['Noto_Sans',sans-serif]">
        <div className="w-[18px] h-[18px] ml-[3px] bg-[#e4ecf2] flex items-center justify-center shrink-0">
          <svg width="16" height="16" viewBox="0 0 14 14" stroke="#5b87a8" strokeWidth={1}>
            <path d="M7 1v4M5 3h4M7 9v4M5 11h4M1 7h4M3 5v4M9 7h4M11 5v4M3 3l1 1M11 3l-1 1M3 11l1-1M11 11l-1-1" />
          </svg>
        </div>
        <span className="ml-[8px] text-[14.100px] text-[#222] flex-1">Tableau - tableau sheet creation - Tableau license expires in 13 days</span>
        <svg width="14" height="14" viewBox="0 0 14 14" stroke="#222" fill="none" className="mr-[44px]"><path d="M1 7h12" /></svg>
        <svg width="14" height="14" viewBox="0 0 14 14" stroke="#222" fill="none" className="mr-[45px]"><path d="M2 4h8v9H2zM4.500 4V1.500h8v8H10" /></svg>
        <svg width="14" height="14" viewBox="0 0 14 14" stroke="#222" fill="none" className="mr-[25px]"><path d="M1 1l12 12M13 1L1 13" /></svg>
      </div>
      {/* menu */}
      <div className="h-[25px] bg-white flex items-center gap-[16px] pl-[8px] pt-[2px] text-[14px] text-[#222] shrink-0 font-['Noto_Sans',sans-serif]">
        {MENU.map(([before, key, after]) => (
          <span key={before + key + after}>
            {before}
            <span className="underline">{key}</span>
            {after}
          </span>
        ))}
      </div>
      <Toolbar />
      <div className="flex-1 flex min-h-0">
        <FormatPanel />
        <MiddleColumn />
        <div className="w-[1445px] ml-[7px] flex flex-col shrink-0">
          <Shelf
            label="Columns"
            pill="Longitude (generate.."
            className="h-[31px] pt-[1px]"
            icon={<svg width="10" height="12" viewBox="0 0 10 12" fill="#555"><path d="M0 0h2v2H0zM4 0h2v2H4zM8 0h2v2H8zM0 4h2v8H0zM4 4h2v8H4zM8 4h2v8H8z" /></svg>}
          />
          <Shelf
            label="Rows"
            pill="Latitude (generated)"
            className="h-[32px] mt-[7px]"
            icon={<svg width="12" height="10" viewBox="0 0 12 10" fill="#555"><path d="M0 0h2v2H0zM4 0h8v2H4zM0 4h2v2H0zM4 4h8v2H4zM0 8h2v2H0zM4 8h8v2H4z" /></svg>}
          />
          <div className="h-[769px] mt-[7px] border border-[#d4d4d4] bg-white pt-[6px] px-[7px] shrink-0 flex flex-col">
            <div className="h-[41px] bg-black border-[3px] border-[#d0ae4a] flex items-center justify-center pt-[1px] text-white text-[26px] font-bold shrink-0">
              Country Name vs Income Group
            </div>
            <div className="relative h-[713px] border border-[#e4e4e4] shrink-0">
              <WorldMap />
              <span className="absolute left-[4px] bottom-0 px-[1px] font-['Liberation_Sans',sans-serif] text-[13px] text-[#666] bg-white/80">© 2025 Mapbox © OpenStreetMap</span>
            </div>
          </div>
        </div>
      </div>
      <SheetTabs />
      <StatusBar />
    </div>
  );
}
